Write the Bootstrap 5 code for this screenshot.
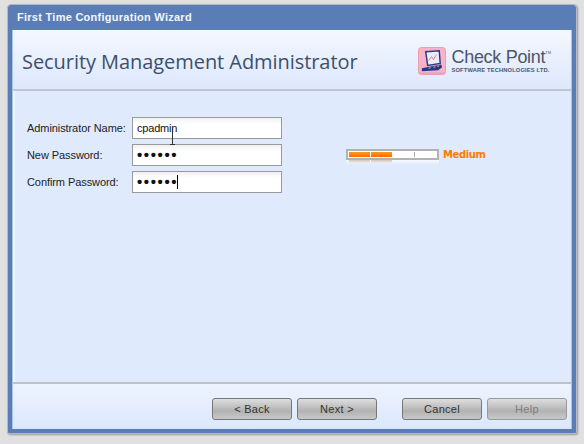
<!DOCTYPE html>
<html lang="en">
<head>
  <meta charset="UTF-8" />
  <title>First Time Configuration Wizard</title>
  <link href="https://cdn.jsdelivr.net/npm/bootstrap@5.3.3/dist/css/bootstrap.min.css" rel="stylesheet" />
  <style>
    html, body { height: 444px; overflow: hidden; }
    body { background: #e0e0e0; font-family: "Liberation Sans", Arial, sans-serif; padding: 4px 7px 10px 7px; }
    .wiz-window { width: 570px; height: 430px; background: #5b7db5; border: 1px solid #b4b9c4; border-radius: 4px 4px 2px 2px; box-shadow: 1px 1px 2px #999; }
    .wiz-title { height: 25px; padding-left: 9px; color: #f2f6ff; font-size: 11px; font-weight: 700; letter-spacing: .27px; }
    .wiz-inner { height: 399px; margin: 0 4px 4px 4px; background: #dfeafd; border: 1px solid #a9c2ea; border-top: 0; }
    .wiz-head { height: 61px; padding: 2px 20px 0 9px; background: linear-gradient(#f3f7ff, #dde8fc); border-bottom: 2px solid #bfc6d2; border-top: 1px solid #f5f8ff; }
    .wiz-head h1 { margin: 0; font: 400 20px "Open Sans", sans-serif; color: #3e4f6c; letter-spacing: -.06px; }
    .cp-logo { gap: 5px; }
    .cp-name { font: 400 18px/19px "Liberation Sans", sans-serif; color: #4c566b; letter-spacing: -.3px; }
    .cp-name sup { font-size: 4px; top: -9px; letter-spacing: 0; }
    .cp-sub { font: 700 5.8px/7px "Liberation Sans", sans-serif; color: #4c566b; letter-spacing: .12px; white-space: nowrap; }
    .wiz-body { height: 291px; padding: 26px 0 0 12px; position: relative; border-left: 2px solid #eef3fe; }
    .wiz-row { height: 22px; margin-bottom: 5px; }
    .wiz-row label { width: 105px; font-size: 11px; color: #222; letter-spacing: -.08px; white-space: nowrap; }
    .wiz-field { width: 150px; height: 22px; background: linear-gradient(#f0f0f0, #fff 6px); border: 1px solid #9a9a9a; padding-left: 4px; font-size: 11px; letter-spacing: -.2px; color: #111; position: relative; }
    .wiz-dots { font-size: 15px; letter-spacing: 1.6px; line-height: 20px; font-weight: 700; }
    .wiz-caret { display: inline-block; width: 1px; height: 14px; background: #000; vertical-align: -2px; margin-left: -1px; }
    .wiz-strength { margin-left: 64px; gap: 4px; margin-top: -1px; }
    .wiz-meter { width: 93px; height: 11px; background: #fff; border: 2px solid #b2b2b2; position: relative; padding: 1px 1px; gap: 1px; }
    .wiz-seg { width: 21px; height: 5px; background: linear-gradient(#ff9a1e, #ff6a00); }
    .wiz-tick { position: absolute; left: 66px; top: 1px; width: 1px; height: 5px; background: #aaa; }
    .wiz-reflect { position: absolute; left: -2px; top: 9px; width: 93px; height: 5px; padding-left: 3px; gap: 1px; background: linear-gradient(#f6f9ff, #dfeafd); }
    .wiz-reflect span { width: 21px; height: 3px; background: linear-gradient(#dcc3b0, #e8eefb); }
    .wiz-medium { font: 700 10px "DejaVu Sans", sans-serif; color: #ff7a00; letter-spacing: -.4px; }
    .wiz-beam { position: absolute; left: 154px; top: 37px; }
    .wiz-foot { height: 47px; padding: 14px 4px 0 0; background: linear-gradient(#eef4ff, #dbe7fc); border-top: 2px solid #bfc3c9; }
    .wiz-foot-groups { gap: 25px; }
    .wiz-btn { width: 80px; height: 22px; padding: 0; border: 1px solid #777; border-radius: 3px; background: linear-gradient(#dedede, #bdbdbd 45%, #b2b2b2 60%, #c8c8c8); color: #333; font-size: 11px; letter-spacing: .3px; line-height: 20px; }
    .wiz-btn:disabled { opacity: 1; border-color: #999; color: #808080; }
    .wiz-btn-group { gap: 5px; }
  </style>
</head>
<body>

<div class="wiz-window">
  <div class="wiz-title d-flex align-items-center">First Time Configuration Wizard</div>
  <div class="wiz-inner">
    <div class="wiz-head d-flex align-items-center justify-content-between">
      <h1>Security Management Administrator</h1>
      <div class="cp-logo d-flex align-items-center">
        <svg width="28" height="28" viewBox="0 0 29 29">
          <rect x=".5" y=".5" width="28" height="28" rx="3" fill="#f9b3c6" stroke="#e79cb0"/>
          <path d="M1 27h27" stroke="#c9a5b5"/>
          <path d="M8 5l14-1 1 13-13 2z" fill="#e8edf8" stroke="#2c3a8c" stroke-width="1.5"/>
          <path d="M11 14l3-4 2 3 3-5" fill="none" stroke="#d66" stroke-width=".8"/>
          <path d="M4 22l20-4 1 3-4 3-17 1z" fill="#27368f"/>
          <path d="M11 22l2-.5M16 21l2-.5M20 20l2-.5" stroke="#e8d83a"/>
        </svg>
        <div>
          <div class="cp-name">Check Point<sup>TM</sup></div>
          <div class="cp-sub">SOFTWARE TECHNOLOGIES LTD.</div>
        </div>
      </div>
    </div>
    <div class="wiz-body">
      <div class="wiz-row d-flex align-items-center">
        <label>Administrator Name:</label>
        <div class="wiz-field d-flex align-items-center">cpadmin</div>
      </div>
      <div class="wiz-row d-flex align-items-center">
        <label>New Password:</label>
        <div class="wiz-field wiz-dots">••••••</div>
        <div class="wiz-strength d-flex align-items-center">
          <div class="wiz-meter d-flex">
            <span class="wiz-seg"></span><span class="wiz-seg"></span><span class="wiz-tick"></span>
            <div class="wiz-reflect d-flex"><span></span><span></span></div>
          </div>
          <span class="wiz-medium">Medium</span>
        </div>
      </div>
      <div class="wiz-row d-flex align-items-center">
        <label>Confirm Password:</label>
        <div class="wiz-field wiz-dots">••••••<span class="wiz-caret"></span></div>
      </div>
      <svg class="wiz-beam" width="7" height="17" viewBox="0 0 7 17">
        <path d="M3.5 0v16M1 16.5h5" stroke="#333" fill="none"/>
      </svg>
    </div>
    <div class="wiz-foot wiz-foot-groups d-flex justify-content-end">
      <div class="wiz-btn-group d-flex">
        <button class="btn wiz-btn" type="button">&lt; Back</button>
        <button class="btn wiz-btn" type="button">Next &gt;</button>
      </div>
      <div class="wiz-btn-group d-flex">
        <button class="btn wiz-btn" type="button">Cancel</button>
        <button class="btn wiz-btn" type="button" disabled>Help</button>
      </div>
    </div>
  </div>
</div>

<script src="https://cdn.jsdelivr.net/npm/bootstrap@5.3.3/dist/js/bootstrap.bundle.min.js"></script>
</body>
</html>
